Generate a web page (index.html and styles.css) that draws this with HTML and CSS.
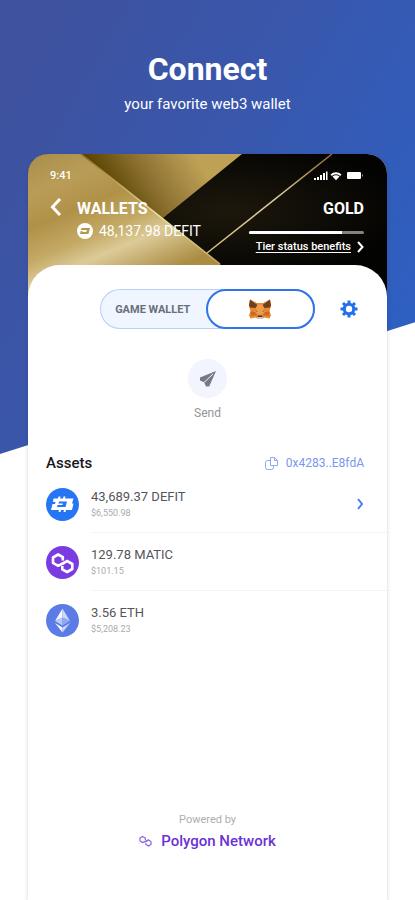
FILE: index.html
```html
<!DOCTYPE html>
<html lang="en">
<head>
<meta charset="utf-8">
<meta name="viewport" content="width=device-width, initial-scale=1">
<title>Connect your wallet</title>
<link rel="stylesheet" href="styles.css">
</head>
<body>
<div class="page">
  <header class="intro">
    <h1>Connect</h1>
    <p>your favorite web3 wallet</p>
  </header>

  <main class="phone">
    <section class="hero">
      <svg class="hero-art" viewBox="0 0 359 142" preserveAspectRatio="none" aria-hidden="true">
        <defs>
          <linearGradient id="goldA" gradientUnits="userSpaceOnUse" x1="20" y1="0" x2="80" y2="142">
            <stop offset="0" stop-color="#ac904e"/><stop offset=".2" stop-color="#b99d57"/><stop offset=".4" stop-color="#b19148"/>
            <stop offset=".6" stop-color="#c4a965"/><stop offset=".74" stop-color="#dccb98"/><stop offset="1" stop-color="#ab8c43"/>
          </linearGradient>
          <linearGradient id="goldB" gradientUnits="userSpaceOnUse" x1="90" y1="50" x2="165" y2="0">
            <stop offset="0" stop-color="#5b4400"/><stop offset=".45" stop-color="#8d7132"/><stop offset="1" stop-color="#bfa155"/>
          </linearGradient>
          <linearGradient id="edge" x1="0" y1="0" x2="1" y2="1">
            <stop offset="0" stop-color="#8d6f22"/><stop offset=".55" stop-color="#f6e6a4"/><stop offset="1" stop-color="#c6a956"/>
          </linearGradient>
          <radialGradient id="dark" cx=".55" cy=".4" r=".5">
            <stop offset="0" stop-color="#1d180c"/><stop offset="1" stop-color="#030302"/>
          </radialGradient>
          <linearGradient id="ray" x1="0" y1="1" x2="1" y2="0">
            <stop offset="0" stop-color="#d8c07a"/><stop offset=".55" stop-color="#d9cba4"/><stop offset="1" stop-color="#8c6d2a"/>
          </linearGradient>
        </defs>
        <path fill="url(#dark)" d="M0 0h359v142H0z"/>
        <path fill="url(#goldB)" d="M53 0h161l-79 64z"/>
        <path fill="url(#goldA)" d="M0 0h53l179 142H0z"/>
        <path stroke="url(#edge)" stroke-width="1.5" d="M53 0l139 110"/>
        <path stroke="url(#ray)" stroke-width="1.5" d="M179 99L304 0"/>
      </svg>

      <div class="status">
        <span>9:41</span>
        <svg width="50" height="10" viewBox="0 0 50 10" fill="#fff" aria-hidden="true">
          <path d="M0 7h2v2H0zM3 6h2v3H3zM6 4h2v5H6zM9 2h2v7H9zM12 0.500h1.500v8.500H12z"/>
          <path d="M16.500 3.500a8 8 0 0 1 11 0l-1.300 1.500a6 6 0 0 0-8.400 0zM18.500 5.600a5 5 0 0 1 7 0L22 9.200z"/>
          <rect x="33" y="1" width="14" height="7" rx="1"/><path d="M48 3.500h1v2h-1z" opacity=".6"/>
        </svg>
      </div>

      <div class="hero-row">
        <button class="back" type="button" aria-label="Back">
          <svg width="12" height="18" viewBox="0 0 12 18" fill="none" stroke="#fff" stroke-width="3"><path d="M10 1L2.500 9l7.500 8"/></svg>
        </button>
        <div class="account">
          <h2>WALLETS</h2>
          <p class="total">
            <svg width="16" height="16" viewBox="0 0 32 32" aria-hidden="true"><circle cx="16" cy="16" r="16" fill="#fff"/><path fill="#b4984f" fill-rule="evenodd" d="M9 10h17l-3 12H6l1.500-6H11l-.5 2h8l1.500-4H8z"/></svg>
            <span>48,137.98 DEFIT</span>
          </p>
        </div>
        <div class="tier">
          <h2>GOLD</h2>
          <progress value="81" max="100" aria-label="Tier progress"></progress>
          <a href="#tiers"><span>Tier status benefits</span>
            <svg width="7" height="12" viewBox="0 0 7 12" fill="none" stroke="#fff" stroke-width="2"><path d="M1 1l4.500 5L1 11"/></svg>
          </a>
        </div>
      </div>
    </section>

    <section class="sheet">
      <div class="toolbar">
        <div class="switch">
          <button class="tab" type="button">GAME WALLET</button>
          <button class="tab active" type="button" aria-label="MetaMask">
            <svg width="22" height="20" viewBox="0 0 44 40" aria-hidden="true">
              <path fill="#e88732" d="M2 1l14 7h12l14-7 2 13-3 10 3 9-3 6-10-2-5 3h-8l-5-3-10 2-3-6 3-9L0 14z"/>
              <path fill="#70401c" d="M2 1l15 11-4 6-11-1-2-4zM42 1L27 12l4 6 11-1 2-4z"/>
              <path fill="#f09a4c" d="M17 11h10l5 15-6 6h-8l-6-6z"/>
              <path fill="#ca6a25" d="M3 25l9 1 5 6-13 2zM41 25l-9 1-5 6 13 2z"/>
              <path fill="#8a5a35" d="M12 22l5 2-1 2zM32 22l-5 2 1 2z"/>
              <path fill="#3e352e" d="M18 33h8l1 3h-10z"/>
              <path fill="#d3c6bb" d="M15 36h14l-3 4h-8z"/>
            </svg>
          </button>
        </div>
        <button class="gear" type="button" aria-label="Settings">
          <svg width="18" height="18" viewBox="0 0 18 18" aria-hidden="true">
            <g stroke="#2270ea" stroke-width="3"><path d="M9 0.500v17M0.500 9h17M3 3l12 12M15 3L3 15"/></g>
            <circle cx="9" cy="9" r="6.300" fill="#2270ea"/><circle cx="9" cy="9" r="3.200" fill="#fff"/>
          </svg>
        </button>
      </div>

      <button class="send" type="button">
        <span class="send-disc">
          <svg width="18" height="18" viewBox="0 0 18 18" aria-hidden="true"><path fill="#777985" d="M17 1L1 7.500v3l4 1.700L7 16.500h3.200z"/><path stroke="#f2f4fe" d="M5 12.500L14 4"/></svg>
        </span>
        <span>Send</span>
      </button>

      <div class="assets-head">
        <h3>Assets</h3>
        <button class="address" type="button">
          <svg width="13" height="13" viewBox="0 0 13 13" fill="none" stroke="#8fa9f2" aria-hidden="true"><path d="M5.500 0.500h4l3 3v5h-7zM9.500 0.500v3h3M5.500 3.500h-3q-2 0-2 2v5q0 2 2 2h4q2 0 2-2v-2"/></svg>
          <span>0x4283..E8fdA</span>
        </button>
      </div>

      <ul class="assets">
        <li>
          <svg width="33" height="33" viewBox="0 0 33 33" aria-hidden="true"><circle cx="16.500" cy="16.500" r="16.500" fill="#2675f5"/><path fill="#fff" d="M7.500 10.500H12l.5-2h2l-.5 2h3l.5-2h2l-.5 2h8.500l-1.500 5h1.500L26 22h-6l-.5 2h-2l.5-2h-3l-.5 2h-2l.5-2H5l1.500-6H9l.5-2H7z"/><path fill="#2675f5" d="M13 13.500h8L19.500 19H11l.5-2h5l.4-1.500h-4.400z"/></svg>
          <div class="asset"><div class="asset-text"><strong>43,689.37 DEFIT</strong><small>$6,550.98</small></div>
            <svg width="7" height="12" viewBox="0 0 7 12" fill="none" stroke="#4a7af0" stroke-width="2" aria-hidden="true"><path d="M1 1l4 5-4 5"/></svg>
          </div>
        </li>
        <li>
          <svg width="33" height="33" viewBox="0 0 33 33" aria-hidden="true"><circle cx="16.500" cy="16.500" r="16.500" fill="#7a3be0"/><path fill="none" stroke="#fff" stroke-width="2.600" stroke-linejoin="round" d="M16.500 17.500l-4.300 2.300L7 16.800v-5.300l5.200-3 4.600 2.600v3.500M16.500 18l4.600-3 5.200 3v5l-5.200 3-4.800-2.700V20M12 19.800l9.500-5"/></svg>
          <div class="asset"><div class="asset-text"><strong>129.78 MATIC</strong><small>$101.15</small></div></div>
        </li>
        <li>
          <svg width="33" height="33" viewBox="0 0 33 33" aria-hidden="true"><circle cx="16.500" cy="16.500" r="16.500" fill="#5b7ce6"/><path fill="#f4f7ff" d="M16.500 4.500v9L9 17z"/><path fill="#cbd8fb" d="M16.500 4.500v9L24 17z"/><path fill="#b9c9f8" d="M9 17l7.500-3.500v8z"/><path fill="#8fa8f0" d="M24 17l-7.500-3.500v8z"/><path fill="#f4f7ff" d="M9 19l7.500 4.500v5z"/><path fill="#cbd8fb" d="M24 19l-7.500 4.500v5z"/></svg>
          <div class="asset"><div class="asset-text"><strong>3.56 ETH</strong><small>$5,208.23</small></div></div>
        </li>
      </ul>

      <footer class="powered">
        <span>Powered by</span>
        <a href="#polygon">
          <svg width="13" height="12" viewBox="0 0 13 12" fill="none" stroke="#8b62e6" stroke-width="1.200" aria-hidden="true"><path d="M6.500 6.500L3.500 7.500l-2.500-1.500V3L3.500 1.500 6.300 3v2M6.500 7l3-2 2.500 1.500v3L9.500 11 6.800 9.500V8M3.500 7.500l6-2.800"/></svg>
          <span>Polygon Network</span>
        </a>
      </footer>
    </section>
  </main>
</div>
</body>
</html>
```

FILE: styles.css
```css
* { box-sizing: border-box; }

body {
  margin: 0;
  background: #fff;
  font-family: Roboto, "Liberation Sans", sans-serif;
  color: #55555c;
}

h1, h2, h3, p, ul { margin: 0; padding: 0; }

button {
  font: inherit;
  color: inherit;
  background: none;
  border: 0;
  padding: 0;
}

a { color: inherit; text-decoration: none; }
svg { display: block; flex: none; }

.page {
  min-height: 100vh;
  display: flex;
  flex-direction: column;
  position: relative;
  isolation: isolate;
}

/* Slanted blue backdrop */
.page::before {
  content: "";
  position: absolute;
  z-index: -1;
  inset: 0 0 auto;
  height: 454px;
  background: linear-gradient(120deg, #3e529f 10%, #3957ac 45%, #2d60c3 90%);
  clip-path: polygon(0 0, 100% 0, 100% 71%, 0 100%);
}

.intro {
  height: 154px;
  padding-top: 49px;
  text-align: center;
  color: #fff;
}
.intro h1 { font-size: 32px; line-height: 40px; font-weight: 700; }
.intro p { font-size: 15px; line-height: 30px; }

.phone {
  flex: 1;
  margin: 0 28px;
  display: flex;
  flex-direction: column;
  background: #fff;
  border-radius: 20px 20px 0 0;
  box-shadow: 0 2px 4px rgba(30, 40, 80, .2);
}

.hero {
  position: relative;
  height: 142px;
  padding: 14px 23px 0 22px;
  color: #fff;
  border-radius: 20px 20px 0 0;
  overflow: hidden;
}
.hero-art { position: absolute; inset: 0; width: 100%; height: 100%; }

.status {
  position: relative;
  display: flex;
  align-items: center;
  justify-content: space-between;
  font-size: 11px;
  line-height: 16px;
  font-weight: 500;
}

.hero-row { position: relative; display: flex; margin-top: 14px; }
.back { align-self: flex-start; width: 27px; }
.account { flex: 1; }
.hero h2 { font-size: 16px; line-height: 22px; font-weight: 700; }
.total { display: flex; align-items: center; gap: 6px; font-size: 14px; line-height: 22px; white-space: nowrap; }

.tier { width: 115px; display: flex; flex-direction: column; align-items: flex-end; }
.tier progress {
  appearance: none;
  display: block;
  width: 100%;
  height: 3px;
  margin: 11px 0 6px;
  border: 0;
}
.tier progress::-webkit-progress-bar { background: #85827e; border-radius: 2px; }
.tier progress::-webkit-progress-value { background: #fff; border-radius: 2px 0 0 2px; }
.tier a { display: flex; align-items: center; gap: 6px; font-size: 11px; line-height: 14px; font-weight: 500; white-space: nowrap; }
.tier a span { text-decoration: underline; text-underline-offset: 2px; }

.sheet {
  flex: 1;
  display: flex;
  flex-direction: column;
  position: relative;
  margin-top: -31px;
  padding: 24px 0 48px 18px;
  background: #fff;
  border-radius: 32px 32px 0 0;
}

.toolbar { display: flex; justify-content: flex-end; align-items: center; gap: 25px; padding-right: 29px; }
.switch { width: 215px; height: 40px; display: flex; background: #eff6ff; border-radius: 20px; box-shadow: inset 0 0 0 1px #b6d0fa; }
.tab { flex: 1; font-size: 11px; font-weight: 700; color: #6a6f79; }
.tab.active {
  display: flex;
  align-items: center;
  justify-content: center;
  background: #fff;
  border: 2px solid #2f74ea;
  border-radius: 20px;
}

.send {
  align-self: center;
  margin: 30px 18px 0 0;
  display: flex;
  flex-direction: column;
  align-items: center;
  gap: 6px;
  font-size: 12px;
  line-height: 18px;
  color: #92949a;
}
.send-disc { width: 39px; height: 39px; display: grid; place-items: center; border-radius: 50%; background: #f2f4fe; }

.assets-head { margin-top: 30px; padding-right: 23px; display: flex; align-items: center; justify-content: space-between; }
.assets-head h3 { font-size: 15px; line-height: 22px; font-weight: 500; color: #17171c; }
.address { display: flex; align-items: center; gap: 8px; font-size: 12px; color: #7797f0; }

.assets { list-style: none; margin-top: 1px; }
.assets li { display: flex; align-items: center; gap: 12px; }
.asset { flex: 1; height: 58px; display: flex; align-items: center; justify-content: space-between; padding-right: 23px; }
.assets li:not(:last-child) .asset { border-bottom: 1px solid #f3f3f5; }
.asset-text { display: flex; flex-direction: column; }
.asset strong { font-size: 13px; line-height: 18px; font-weight: 400; }
.asset small { font-size: 9px; line-height: 14px; color: #a9aaaf; }

.powered { margin: auto 18px 0 0; display: flex; flex-direction: column; align-items: center; font-size: 11px; line-height: 20px; color: #adadb2; }
.powered a { display: flex; align-items: center; gap: 9px; font-size: 15px; line-height: 22px; font-weight: 500; color: #6a32d6; }
```
